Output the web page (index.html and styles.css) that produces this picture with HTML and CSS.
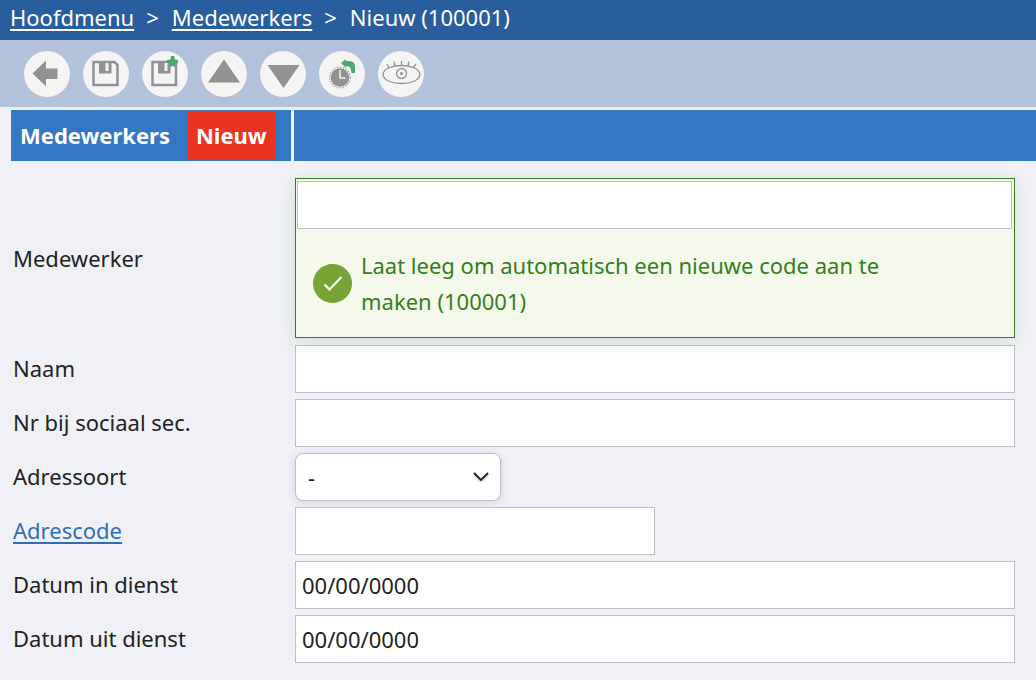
FILE: index.html
```html
<!DOCTYPE html>
<html lang="nl">
<head>
<meta charset="utf-8">
<title>Medewerkers - Nieuw</title>
<link rel="stylesheet" href="styles.css">
</head>
<body>
<nav class="crumbs" aria-label="Kruimelpad">
  <a href="#">Hoofdmenu</a><span class="sep">&gt;</span><a href="#">Medewerkers</a><span class="sep">&gt;</span><span>Nieuw (100001)</span>
</nav>
<div class="toolbar">
  <button class="tool" type="button" aria-label="Terug">
    <svg viewBox="0 0 46 46"><path class="fill" d="M8.500 22.500 22 9.500V17.500H33.500V28H22V35.500Z"/></svg>
  </button>
  <button class="tool" type="button" aria-label="Opslaan">
    <svg viewBox="0 0 46 46"><path class="line" d="M10.500 11H31.500L34.500 14V34H10.500Z"/><path class="fill" d="M16 10H28.500V22.500H16Z"/><path class="light" d="M22.500 12H25.500V20H22.500Z"/></svg>
  </button>
  <button class="tool" type="button" aria-label="Opslaan en nieuw">
    <svg viewBox="0 0 46 46"><path class="line" d="M10.500 11H34V34H10.500Z"/><path class="fill" d="M16 10H28.500V22.500H16Z"/><path class="light" d="M22.500 12H25.500V20H22.500Z"/><path class="green" d="M29 5H32L33 8.500 36 9V12L33 13 34 16 30.500 15 27 16 28 12.500 24.500 11V9L28.500 8.500Z"/></svg>
  </button>
  <button class="tool" type="button" aria-label="Vorige">
    <svg viewBox="0 0 46 46"><path class="fill" d="M23 8.500 39 31.500H7Z"/></svg>
  </button>
  <button class="tool" type="button" aria-label="Volgende">
    <svg viewBox="0 0 46 46"><path class="fill" d="M7.500 14H39.500L23.500 37Z"/></svg>
  </button>
  <button class="tool" type="button" aria-label="Geschiedenis">
    <svg viewBox="0 0 46 46"><circle class="fill" cx="21" cy="26.500" r="9.300"/><circle class="ticks" cx="21" cy="26.500" r="10.300"/><path class="hands" d="M21 19V27H26.500"/><path class="green" d="M22 12 27 8V10H30Q36 10 36 16V22H32.500L31.500 17.500Q31 15 27 15V17Z"/></svg>
  </button>
  <button class="tool" type="button" aria-label="Bekijken">
    <svg viewBox="0 0 46 46"><path class="thin" d="M5 23.500C6 11.500 41 11.500 42 23.500C41 35.500 6 35.500 5 23.500Z"/><circle class="thin" cx="23.500" cy="22.500" r="5"/><circle class="fill" cx="23.500" cy="22.500" r="1.500"/><path class="thin" d="M9 13 11 17M16 10.500 17 15M23.500 10V14M31 10.500 30 15M38 13 35 17"/></svg>
  </button>
</div>
<div class="menu">
  <div class="tabs"><a class="tab" href="#">Medewerkers</a><a class="tab active" href="#">Nieuw</a></div>
  <div class="fill-bar"></div>
</div>
<form class="form">
  <label for="code">Medewerker</label>
  <div class="notice">
    <input class="field" id="code" type="text" aria-describedby="hint">
    <div class="hint">
      <svg class="check" viewBox="0 0 39 39"><circle cx="19.500" cy="19.500" r="19.500"/><path d="M11.500 20.500 16.500 25.500 28.500 13"/></svg>
      <p id="hint">Laat leeg om automatisch een nieuwe code aan te maken (100001)</p>
    </div>
  </div>
  <label for="naam">Naam</label><input class="field" id="naam" type="text">
  <label for="sociaal">Nr bij sociaal sec.</label><input class="field" id="sociaal" type="text">
  <label for="soort">Adressoort</label>
  <div class="select-wrap">
    <select class="select" id="soort"><option>-</option></select>
    <svg class="chevron" viewBox="0 0 16 10"><path d="M1 1 8 8 15 1"/></svg>
  </div>
  <label for="adres"><a href="#">Adrescode</a></label><input class="field short" id="adres" type="text">
  <label for="in">Datum in dienst</label><input class="field" id="in" type="text" value="00/00/0000">
  <label for="uit">Datum uit dienst</label><input class="field" id="uit" type="text" value="00/00/0000">
</form>
</body>
</html>
```
FILE: styles.css
```css
* { box-sizing: border-box; }
body {
  margin: 0;
  background: #f0f1f6;
  color: #222;
  font: 22px/30px "Noto Sans", "Open Sans", sans-serif;
}
.crumbs {
  display: flex;
  align-items: center;
  height: 40px;
  padding: 0 10px 6px;
  background: #285e9d;
  color: #fff;
}
.crumbs a { color: inherit; }
a {
  text-decoration-thickness: 2px;
  text-underline-offset: 3px;
}
.sep { margin: 0 13px 0 12px; }
.toolbar {
  display: flex;
  gap: 13px;
  padding: 11px 24px 10px;
  background: #b2c1dc;
}
.tool {
  width: 46px;
  height: 46px;
  padding: 0;
  border: 0;
  border-radius: 50%;
  background: #f4f4f4;
}
.tool svg { display: block; width: 100%; }
.fill { fill: #929292; }
.light { fill: #f4f4f4; }
.green { fill: #50a771; }
.line { fill: none; stroke: #929292; stroke-width: 2.5; }
.thin { fill: none; stroke: #929292; stroke-width: 1.3; }
.ticks { fill: none; stroke: #b0b0b0; stroke-width: 1.5; stroke-dasharray: 1.5 1.5; }
.hands { fill: none; stroke: #f4f4f4; stroke-width: 1.5; }
.menu {
  display: flex;
  gap: 3px;
  height: 51px;
  margin: 3px 0 17px 11px;
}
.tabs {
  display: flex;
  padding: 2px 15px 2px 0;
  background: #3477c2;
}
.tab {
  display: flex;
  align-items: center;
  padding: 0 9px 2px;
  color: #fff;
  font-weight: 700;
  text-decoration: none;
}
.tab:first-child { padding-right: 17px; }
.tab.active { background: #eb3323; }
.fill-bar { flex: 1; background: #3477c2; }
.form {
  display: grid;
  grid-template-columns: 282px 1fr;
  row-gap: 6px;
  align-items: center;
  padding: 0 21px 16px 13px;
}
.form label { padding-bottom: 2px; }
.form label a { color: #316eb9; }
.notice {
  position: relative;
  margin-bottom: 1px;
  padding: 2px 2px 18px 1px;
  border: 1px solid #337f20;
  background: #f5f9eb;
  box-shadow: 0 4px 18px rgba(45, 110, 45, .14);
}
.field {
  width: 100%;
  height: 48px;
  padding: 0 6px;
  border: 1px solid #bdbfc2;
  border-radius: 0;
  background: #fff;
  color: #222;
  font: inherit;
}
.notice .field { display: block; }
.short { width: 50%; }
.hint {
  display: flex;
  align-items: center;
  gap: 9px;
  margin: 18px 100px 0 16px;
  color: #337f20;
  line-height: 36px;
}
.hint p { margin: 0; }
.check { flex: none; width: 39px; height: 39px; }
.check circle { fill: #78a435; }
.check path { fill: none; stroke: #fff; stroke-width: 2.2; }
.select-wrap { display: grid; width: 206px; }
.select {
  grid-area: 1 / 1;
  height: 48px;
  padding: 0 12px 1px;
  border: 1px solid #bdbfc2;
  border-radius: 8px;
  background: #fff;
  box-shadow: 0 2px 8px rgba(60, 80, 120, .16);
  color: #222;
  font: inherit;
  appearance: none;
}
.chevron {
  grid-area: 1 / 1;
  place-self: center end;
  width: 16px;
  height: 10px;
  margin-right: 12px;
  fill: none;
  stroke: #222;
  stroke-width: 1.8;
  pointer-events: none;
  filter: drop-shadow(0 1px 1px rgba(0, 0, 0, .3));
}
```
